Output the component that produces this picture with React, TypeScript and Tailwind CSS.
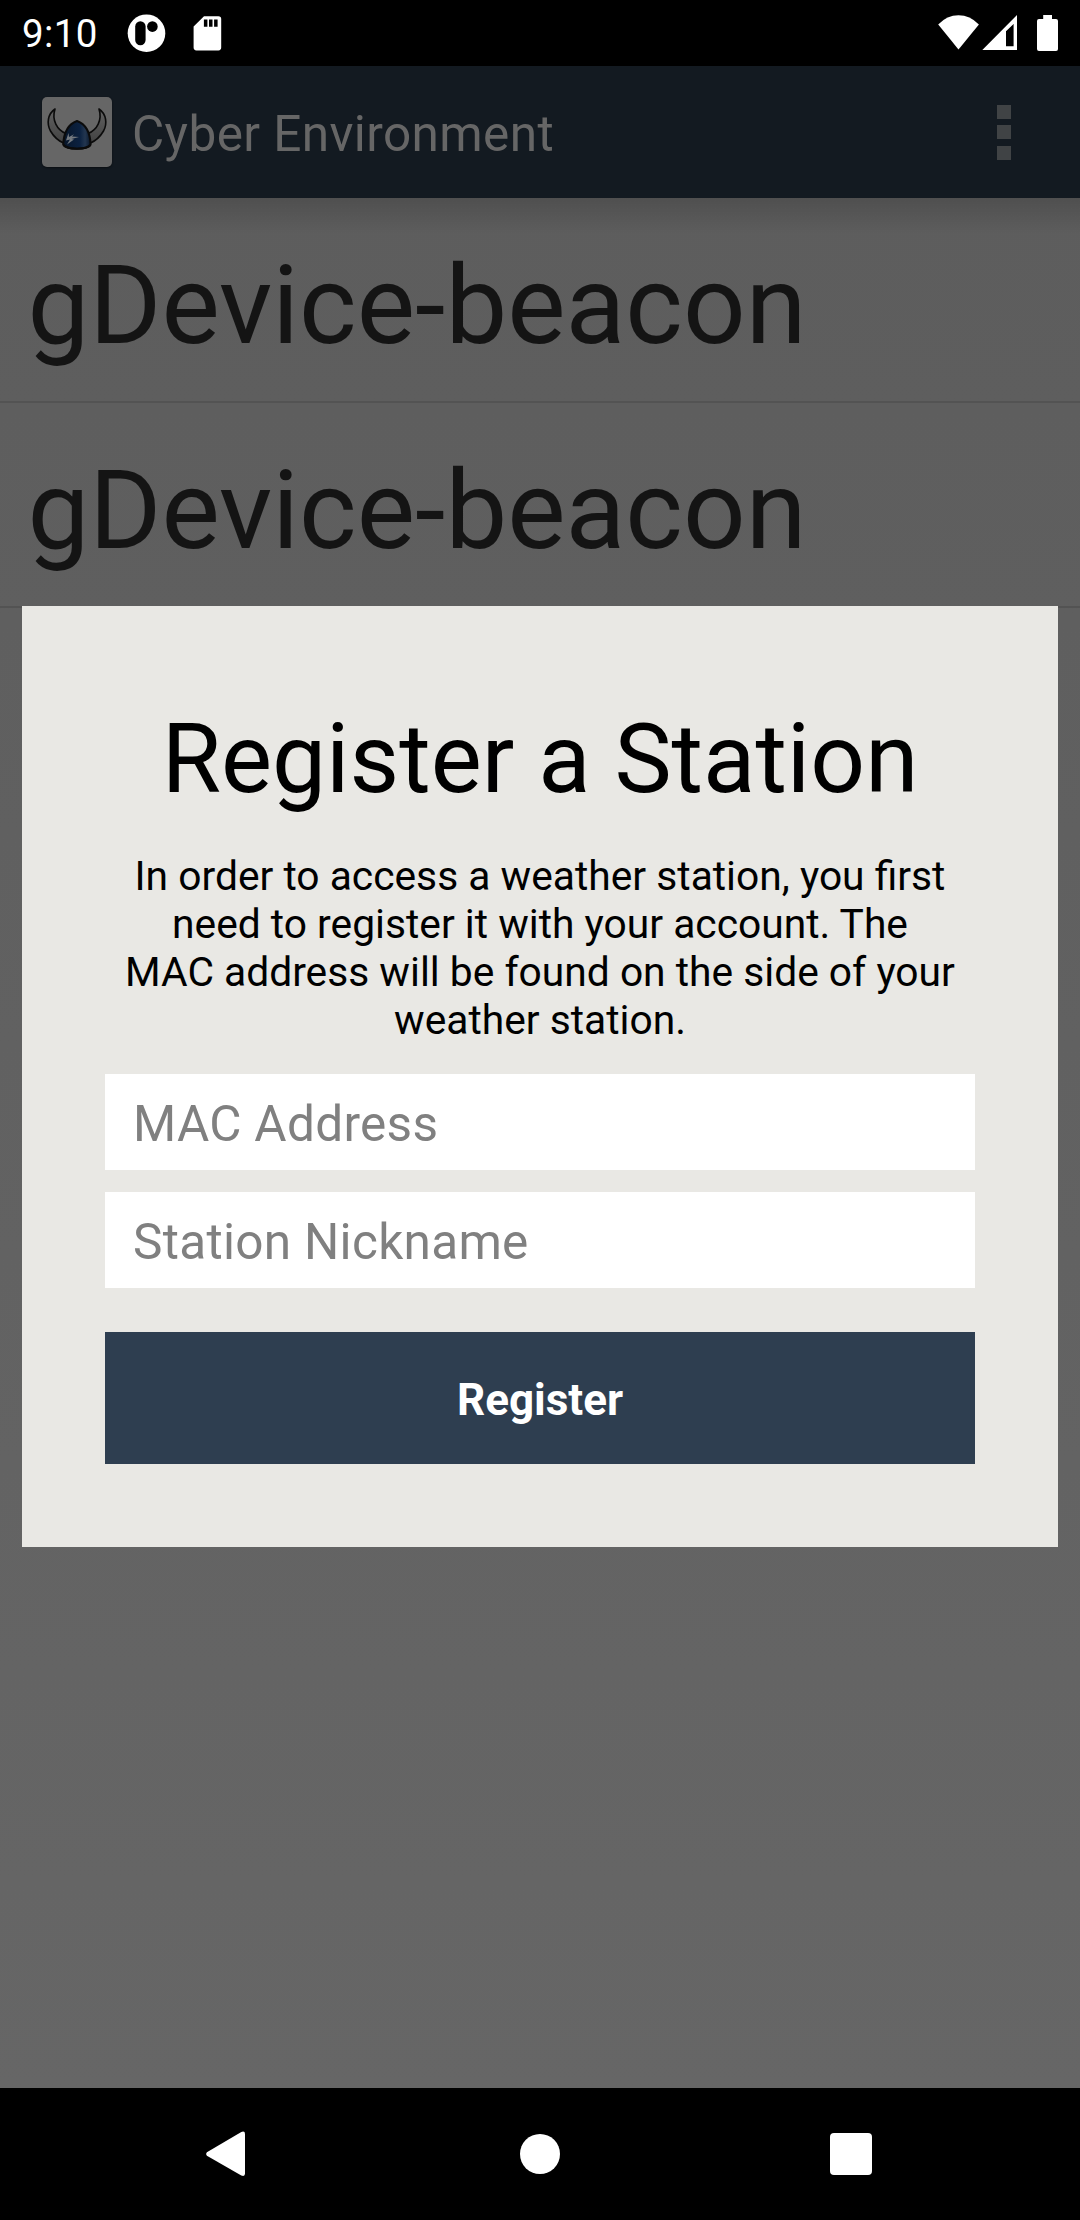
import React from "react";

function StatusBar() {
  return (
    <header className="flex h-[66px] items-center justify-between bg-black pl-[22px] pr-[22px] text-white">
      <div className="flex h-full items-center">
        <span className="w-[105px] pt-[2px] text-[38.5px] leading-[66px] tracking-[0.4px]">9:10</span>
        <svg className="h-[66px] w-[96px]" viewBox="127 0 96 66" fill="#fff">
          <circle cx="146.5" cy="33.2" r="18.8" />
          <rect x="135.2" y="21.2" width="10.4" height="24" rx="5.2" fill="#000" />
          <circle cx="152.4" cy="26.6" r="5.3" fill="#000" />
          <path d="M204 16.2h14.4a2.8 2.8 0 0 1 2.8 2.8v28.6a2.8 2.8 0 0 1-2.8 2.8h-22a2.8 2.8 0 0 1-2.8-2.8V26.4z" />
          <path d="M203.9 19.6h3.5v7.2h-3.5zM209 19.6h3.5v7.2H209zM214.1 19.6h3.5v7.2h-3.5z" fill="#000" />
        </svg>
      </div>
      <svg className="h-[66px] w-[122px]" viewBox="936 0 122 66" fill="#fff">
        <path d="M958.5 49.4L938.2 24.4Q947 15.2 958.5 15.2T978.9 24.4z" />
        <path fillRule="evenodd" d="M982.3 50L1017 15v35zM1006 46.2h7.6V24l-7.6 7.2z" />
        <path d="M1014 23h3v27h-3z" />
        <path d="M1043.2 15h8.8v4h4a2 2 0 0 1 2 2v28a2 2 0 0 1-2 2h-17a2 2 0 0 1-2-2V21a2 2 0 0 1 2-2h4.2z" />
      </svg>
    </header>
  );
}

function HelmetLogo() {
  return (
    <svg className="h-[70px] w-[70px]" viewBox="0 0 70 70">
      <defs>
        <linearGradient id="horn" x1="0" y1="0" x2="0" y2="1">
          <stop offset="0" stopColor="#626262" />
          <stop offset="1" stopColor="#424242" />
        </linearGradient>
        <linearGradient id="helmet" x1="0" y1="0" x2="1" y2="0">
          <stop offset="0" stopColor="#081629" />
          <stop offset="0.6" stopColor="#0b2140" />
          <stop offset="0.8" stopColor="#233650" />
          <stop offset="1" stopColor="#081629" />
        </linearGradient>
      </defs>
      <g stroke="#0b0b0b" strokeWidth="1.600" strokeLinejoin="round">
        <path fill="url(#horn)" d="M13 12C5.500 17 4.500 27 8.500 34C12 40 17 44 21.500 46L24 36.500C15 33 9.500 23 13 12z" />
        <path fill="url(#horn)" d="M57 12C64.500 17 65.500 27 61.500 34C58 40 53 44 48.500 46L46 36.500C55 33 60.500 23 57 12z" />
        <path fill="url(#helmet)" strokeWidth="2" d="M35 24C28 26.500 22 33 21.200 47.500C24 53 46 53 48.600 47.500C48 33 42 26.500 35 24z" />
      </g>
      <path d="M21.500 48C26 53 44 53 48.500 48" fill="none" stroke="#0b0b0b" strokeWidth="2.200" />
      <path fill="#747a80" d="M26.500 36L24 43.500L28 42.500L25 47.500L32 42.600L29.500 42L37 40L30 39.500L32 37.300L27 40z" />
    </svg>
  );
}

function AppBar() {
  return (
    <div className="flex h-[132px] items-center bg-[#131a21] pl-[42px] pr-[69px]">
      <div className="h-[70px] w-[70px] rounded-[5px] bg-[#666666] shadow-[0_1px_2px_#0a0e12]">
        <HelmetLogo />
      </div>
      <h1 className="ml-[20px] flex-1 pt-[4px] text-[49.5px] leading-[58px] tracking-[0.4px] text-[#666666]">Cyber Environment</h1>
      <div className="flex flex-col gap-[6.500px]">
        <i className="block h-[14px] w-[14px] bg-[#404345]" />
        <i className="block h-[14px] w-[14px] bg-[#404345]" />
        <i className="block h-[14px] w-[14px] bg-[#404345]" />
      </div>
    </div>
  );
}

function DeviceRow({ name }: { name: string }) {
  return (
    <li className="h-[205px] border-b-2 border-[#535353] px-[27.500px] pt-[43px] text-[110px] leading-[129px] text-[#141414]">
      {name}
    </li>
  );
}

function RegisterDialog() {
  return (
    <section className="absolute left-[22px] top-[606px] h-[941px] w-[1036px] bg-[#e9e8e4] px-[83px] pt-[97px] text-black">
      <h2 className="h-[113px] text-center text-[96.250px] leading-[113px]">Register a Station</h2>
      <p className="mt-[36px] text-center text-[40.750px] leading-[48px] whitespace-nowrap">
        In order to access a weather station, you first
        <br />
        need to register it with your account. The
        <br />
        MAC address will be found on the side of your
        <br />
        weather station.
      </p>
      <form className="mt-[30px] flex flex-col">
        <input
          className="h-[96px] bg-white px-[28px] pt-[4px] text-[49.5px] tracking-[0.3px] outline-none placeholder:text-[#808080]"
          placeholder="MAC Address"
        />
        <input
          className="mt-[22px] h-[96px] bg-white px-[28px] pt-[4px] text-[49.5px] tracking-[0.3px] outline-none placeholder:text-[#808080]"
          placeholder="Station Nickname"
        />
        <button type="button" className="mt-[44px] h-[132px] bg-[#2e3e50] pt-[4px] text-[44px] font-bold text-white">
          Register
        </button>
      </form>
    </section>
  );
}

function NavBar() {
  return (
    <footer className="flex h-[132px] items-center bg-black pl-[205px]">
      <svg className="h-[48px] w-[41px]" viewBox="0 0 41 48" fill="#fff">
        <path d="M1.900 22.200L36.300 2Q40 0.600 40 4V43.600Q40 47 36.300 45.600L1.900 25.800Q0.200 24 1.900 22.200z" />
      </svg>
      <span className="ml-[274px] h-[40px] w-[40px] rounded-full bg-white" />
      <span className="ml-[270px] h-[42px] w-[42px] rounded-[4px] bg-white" />
    </footer>
  );
}

export default function App() {
  return (
    <div className="relative flex h-[2220px] w-[1080px] flex-col overflow-hidden bg-black font-['Roboto',sans-serif]">
      <StatusBar />
      <AppBar />
      <main className="relative flex-1 bg-linear-to-b from-[#5d5d5d] to-[#666666]">
        <div className="pointer-events-none absolute inset-x-0 top-0 h-[36px] bg-linear-to-b from-black/15 to-transparent" />
        <ul>
          <DeviceRow name="gDevice-beacon" />
          <DeviceRow name="gDevice-beacon" />
        </ul>
      </main>
      <NavBar />
      <RegisterDialog />
    </div>
  );
}
